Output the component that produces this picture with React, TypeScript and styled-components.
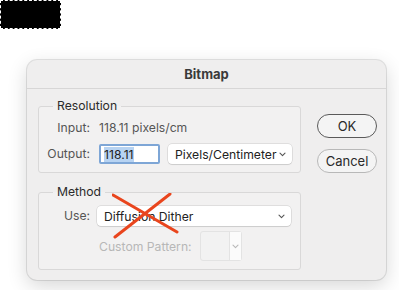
import { FC } from 'react'
import styled, { createGlobalStyle } from 'styled-components'

const GlobalStyle = createGlobalStyle`
  html, body {
    margin: 0;
    background: #ffffff;
  }
  body {
    font-family: Inter, "Liberation Sans", "DejaVu Sans", sans-serif;
    color: #2e2e2e;
  }
`

const Chevron: FC<{ color?: string }> = ({ color = '#555' }) => (
  <ChevronIcon width="7" height="5" viewBox="0 0 7 5">
    <path d="M1 1.2 L3.5 3.6 L6 1.2" fill="none" stroke={color} strokeWidth="1.1" strokeLinecap="round" strokeLinejoin="round" />
  </ChevronIcon>
)

const App: FC = () => {
  return (
    <Page>
      <GlobalStyle />
      <Marquee />
      <Dialog>
        <TitleBar>Bitmap</TitleBar>
        <Body>
          <Groups>
            <Group>
              <Legend>Resolution</Legend>
              <FieldGrid>
                <Label>Input:</Label>
                <Value>118.11 pixels/cm</Value>
                <Label>Output:</Label>
                <Controls>
                  <NumberBox>
                    <Selected>118.11</Selected>
                  </NumberBox>
                  <Select $width={124}>
                    Pixels/Centimeter
                    <Chevron />
                  </Select>
                </Controls>
              </FieldGrid>
            </Group>
            <Group $tight>
              <Legend>Method</Legend>
              <FieldGrid $rowGap={5}>
                <Label>Use:</Label>
                <Select $width={194}>
                  Diffusion Dither
                  <Chevron />
                </Select>
                <span />
                <Controls $gap={8}>
                  <DisabledLabel>Custom Pattern:</DisabledLabel>
                  <PatternPicker>
                    <PatternSwatch />
                    <PatternArrow>
                      <Chevron color="#b9b9b9" />
                    </PatternArrow>
                  </PatternPicker>
                </Controls>
              </FieldGrid>
            </Group>
          </Groups>
          <Buttons>
            <Button $default>OK</Button>
            <Button>Cancel</Button>
          </Buttons>
        </Body>
        <CrossMark width="68" height="47" viewBox="0 0 68 47">
          <path d="M1 2 L65 39 M58 1 L3 44" stroke="#e9451d" strokeWidth="3" strokeLinecap="round" fill="none" />
        </CrossMark>
      </Dialog>
    </Page>
  )
}

const Page = styled.div`
  width: 399px;
  height: 290px;
  overflow: hidden;
`

const Marquee = styled.div`
  width: 61px;
  height: 29px;
  background: #000;
  outline: 1px dashed #ffffff;
  outline-offset: -1px;
`

const Dialog = styled.div`
  position: relative;
  margin: 31px 0 0 27px;
  width: 359px;
  height: 220px;
  box-sizing: border-box;
  border-radius: 10px;
  background: #efeeee;
  box-shadow:
    0 0 0 1px rgba(0, 0, 0, 0.1),
    0 6px 20px rgba(0, 0, 0, 0.16);
`

const TitleBar = styled.div`
  height: 28px;
  display: flex;
  align-items: center;
  justify-content: center;
  border-bottom: 1px solid #d7d6d6;
  font-size: 13px;
  font-weight: 700;
  color: #3a3a3a;
`

const Body = styled.div`
  display: grid;
  grid-template-columns: 263px 60px;
  column-gap: 16px;
  padding: 9px 9px 0 11px;
`

const Groups = styled.div`
  display: flex;
  flex-direction: column;
  gap: 11px;
`

const Group = styled.fieldset<{ $tight?: boolean }>`
  margin: 0;
  padding: ${(p) => (p.$tight ? '6px 0 8px' : '4px 0 8px')};
  border: 1px solid #d9d8d8;
  border-radius: 3px;
  background: rgba(255, 255, 255, 0.18);
  min-width: 0;
`

const Legend = styled.legend`
  margin-left: 14px;
  padding: 0 4px;
  font-size: 12.2px;
  line-height: 16px;
  color: #2b2b2b;
`

const FieldGrid = styled.div<{ $rowGap?: number }>`
  display: grid;
  grid-template-columns: 51px 1fr;
  column-gap: 7px;
  row-gap: ${(p) => p.$rowGap ?? 6}px;
  align-items: center;
`

const Label = styled.span`
  justify-self: end;
  font-size: 12.2px;
  line-height: 20px;
  color: #555;
`

const Value = styled.span`
  font-size: 12.2px;
  line-height: 20px;
  color: #555;
  padding-left: 2px;
`

const Controls = styled.div<{ $gap?: number }>`
  display: flex;
  align-items: center;
  gap: ${(p) => p.$gap ?? 8}px;
`

const NumberBox = styled.div`
  width: 61px;
  height: 20px;
  box-sizing: border-box;
  margin-left: 2px;
  padding: 0 3px;
  display: flex;
  align-items: center;
  background: #fff;
  border: 2px solid #7ea6d6;
  border-radius: 2px;
  font-size: 12.2px;
  color: #222;
`

const Selected = styled.span`
  background: #b7d3f2;
  line-height: 15px;
`

const Select = styled.div<{ $width: number }>`
  width: ${(p) => p.$width}px;
  height: 20px;
  box-sizing: border-box;
  padding: 0 6px 0 7px;
  display: flex;
  align-items: center;
  justify-content: space-between;
  white-space: nowrap;
  background: #fff;
  border-radius: 4px;
  box-shadow:
    0 0 0 0.5px rgba(0, 0, 0, 0.16),
    0 1px 1px rgba(0, 0, 0, 0.08);
  font-size: 12.2px;
  color: #222;
`

const ChevronIcon = styled.svg`
  flex-shrink: 0;
`

const DisabledLabel = styled.span`
  margin-left: 2px;
  font-size: 12.2px;
  color: #b7b7b7;
`

const PatternPicker = styled.div`
  display: flex;
  height: 28px;
  border: 1px solid #e3e3e3;
  border-radius: 3px;
  background: #f2f2f2;
`

const PatternSwatch = styled.div`
  width: 28px;
  border-right: 1px solid #e3e3e3;
`

const PatternArrow = styled.div`
  width: 11px;
  display: flex;
  align-items: center;
  justify-content: center;
  background: #fbfbfb;
`

const Buttons = styled.div`
  display: flex;
  flex-direction: column;
  gap: 11px;
  padding-top: 16px;
`

const Button = styled.button<{ $default?: boolean }>`
  width: 60px;
  height: 24px;
  padding: 0;
  border-radius: 12px;
  border: ${(p) => (p.$default ? '1.5px solid #5a5a5a' : '1px solid #b8b8b8')};
  background: #f4f4f4;
  font-family: inherit;
  font-size: 13px;
  color: #2a2a2a;
`

const CrossMark = styled.svg`
  position: absolute;
  left: 85px;
  top: 133px;
  pointer-events: none;
`

export default App
